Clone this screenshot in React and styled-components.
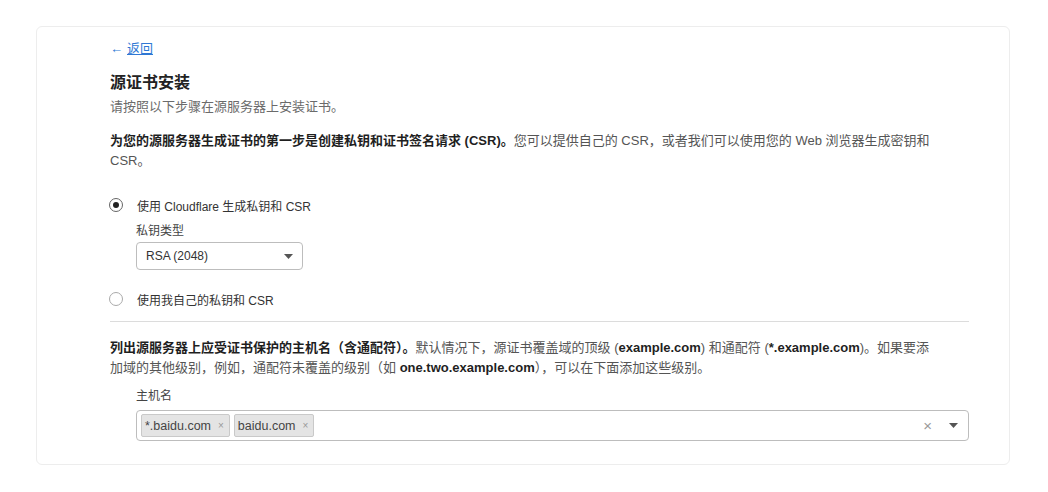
import styled, { createGlobalStyle } from "styled-components";

const GlobalStyle = createGlobalStyle`
  body {
    margin: 0;
    background: #fff;
    font-family: "Liberation Sans", "Noto Sans CJK SC", sans-serif;
    color: #333;
  }
`;

const Page = styled.div`
  padding: 26px 38px 25px 36px;
`;

const Card = styled.div`
  border: 1px solid #ededed;
  border-radius: 6px;
  padding: 12px 40px 23px 73px;
  display: flex;
  flex-direction: column;
`;

const Back = styled.a`
  font-size: 13px;
  line-height: 20px;
  color: #2f78d4;
  cursor: pointer;
  align-self: flex-start;
  span {
    text-decoration: underline;
    margin-left: 4px;
  }
`;

const Title = styled.h2`
  margin: 12px 0 0;
  font-size: 16px;
  line-height: 24px;
  font-weight: 700;
  color: #222;
`;

const Subtitle = styled.p`
  margin: 2px 0 0;
  font-size: 13px;
  line-height: 20px;
  color: #6b6b6b;
`;

const Para = styled.p`
  margin: ${(p) => p.$top}px 0 0;
  font-size: 13px;
  line-height: 20px;
  color: #555;
  padding-right: 36px;
  b {
    color: #1f1f1f;
    font-weight: 700;
  }
`;

const RadioRow = styled.label`
  display: flex;
  align-items: center;
  margin-top: ${(p) => p.$top}px;
  height: 20px;
  font-size: 12px;
  color: #333;
  cursor: pointer;
`;

const RadioDot = styled.span`
  width: 12px;
  height: 12px;
  border-radius: 50%;
  border: 1px solid ${(p) => (p.$checked ? "#666" : "#aaa")};
  margin-left: -1px;
  margin-right: 14px;
  display: flex;
  align-items: center;
  justify-content: center;
  background: #fff;
  &::after {
    content: "";
    width: 6px;
    height: 6px;
    border-radius: 50%;
    background: ${(p) => (p.$checked ? "#222" : "transparent")};
  }
`;

const Indent = styled.div`
  padding-left: 26px;
  display: flex;
  flex-direction: column;
`;

const FieldLabel = styled.div`
  margin-top: ${(p) => p.$top}px;
  font-size: 12px;
  line-height: 18px;
  color: #444;
`;

const Select = styled.div`
  margin-top: 2px;
  box-sizing: border-box;
  width: 167px;
  height: 28px;
  border: 1px solid #bdbdbd;
  border-radius: 4px;
  display: flex;
  align-items: center;
  justify-content: space-between;
  padding: 0 9px;
  font-size: 12px;
  color: #333;
`;

const Caret = () => (
  <svg width="9" height="5" viewBox="0 0 9 5">
    <path d="M0 0h9L4.5 5z" fill="#555" />
  </svg>
);

const Divider = styled.hr`
  margin: 12px 0 0;
  border: none;
  border-top: 1px solid #dcdcdc;
`;

const TagBox = styled.div`
  margin-top: 5px;
  height: 31px;
  box-sizing: border-box;
  border: 1px solid #bdbdbd;
  border-radius: 4px;
  display: flex;
  align-items: center;
  padding: 0 10px 0 4px;
  gap: 4px;
`;

const Tag = styled.span`
  height: 23px;
  box-sizing: border-box;
  background: #e4e4e4;
  border: 1px solid #c9c9c9;
  border-radius: 2px;
  display: flex;
  align-items: center;
  padding: 0 5px 0 3px;
  font-size: 12.5px;
  color: #444;
  i {
    font-style: normal;
    font-size: 10px;
    color: #999;
    margin-left: 7px;
  }
`;

const Spacer = styled.div`
  flex: 1;
`;

const Clear = styled.span`
  font-size: 15px;
  color: #999;
  margin-right: 13px;
  line-height: 1;
`;

export default function App() {
  return (
    <>
      <GlobalStyle />
      <Page>
        <Card>
          <Back>
            ←<span>返回</span>
          </Back>
          <Title>源证书安装</Title>
          <Subtitle>请按照以下步骤在源服务器上安装证书。</Subtitle>
          <Para $top={14}>
            <b>为您的源服务器生成证书的第一步是创建私钥和证书签名请求 (CSR)。</b>
            您可以提供自己的 CSR，或者我们可以使用您的 Web 浏览器生成密钥和 CSR。
          </Para>
          <RadioRow $top={24}>
            <RadioDot $checked />
            使用 Cloudflare 生成私钥和 CSR
          </RadioRow>
          <Indent>
            <FieldLabel $top={7}>私钥类型</FieldLabel>
            <Select>
              RSA (2048)
              <Caret />
            </Select>
          </Indent>
          <RadioRow $top={19}>
            <RadioDot />
            使用我自己的私钥和 CSR
          </RadioRow>
          <Divider />
          <Para $top={16}>
            <b>列出源服务器上应受证书保护的主机名（含通配符）。</b>
            默认情况下，源证书覆盖域的顶级 (<b>example.com</b>) 和通配符 (<b>*.example.com</b>)。如果要添加域的其他级别，例如，通配符未覆盖的级别（如 <b>one.two.example.com</b>），可以在下面添加这些级别。
          </Para>
          <Indent>
            <FieldLabel $top={9}>主机名</FieldLabel>
            <TagBox>
              <Tag>
                *.baidu.com<i>×</i>
              </Tag>
              <Tag>
                baidu.com<i>×</i>
              </Tag>
              <Spacer />
              <Clear>×</Clear>
              <Caret />
            </TagBox>
          </Indent>
        </Card>
      </Page>
    </>
  );
}
